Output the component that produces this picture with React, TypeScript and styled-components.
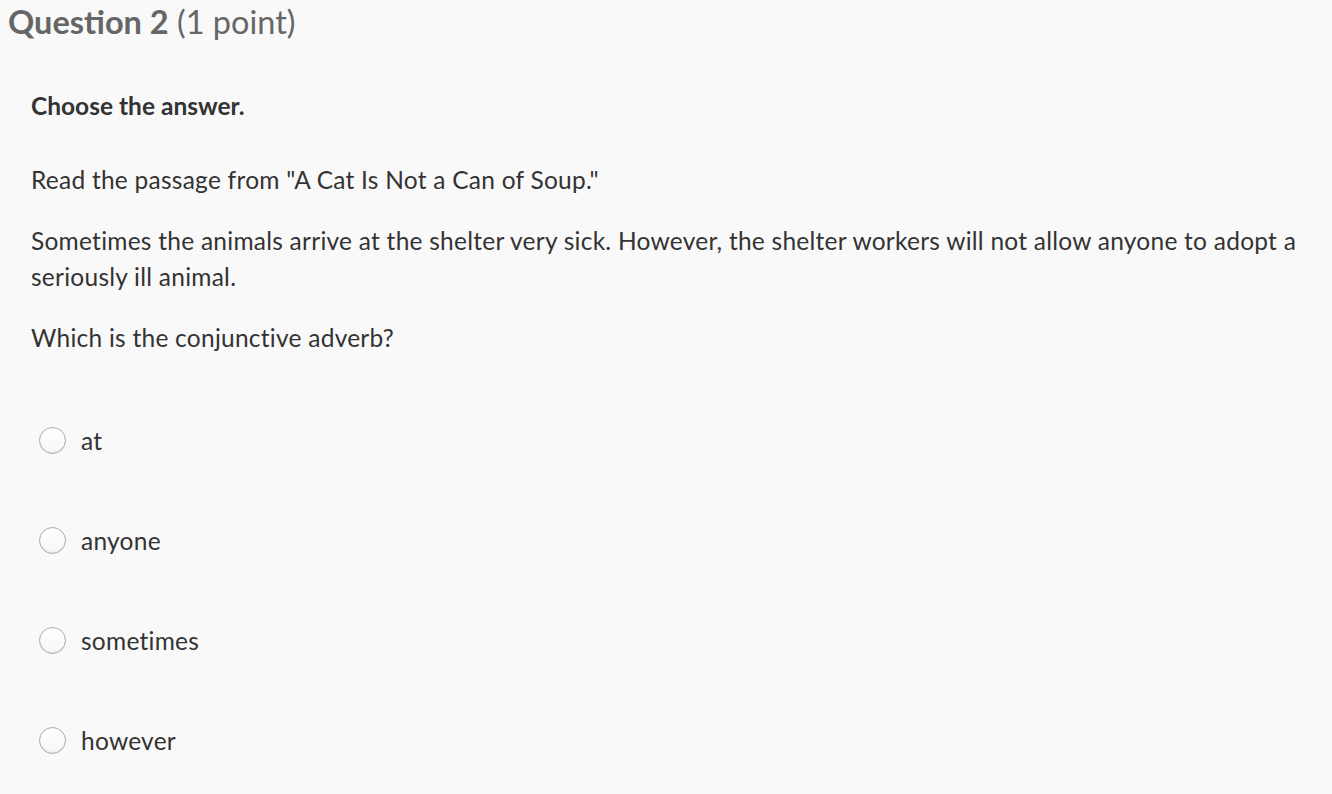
import styled, { createGlobalStyle } from "styled-components";

const GlobalStyle = createGlobalStyle`
    html, body {
        margin: 0;
        padding: 0;
        background: #f9f9f9;
    }
    body {
        font-family: Lato, "Open Sans", sans-serif;
        color: #333;
    }
`;

const options = ["at", "anyone", "sometimes", "however"];

function App() {
    return (
        <Page>
            <GlobalStyle />
            <Title>
                <strong>Question 2</strong> (1 point)
            </Title>
            <Body>
                <Prompt>Choose the answer.</Prompt>
                <Paragraph $gap={44}>Read the passage from "A Cat Is Not a Can of Soup."</Paragraph>
                <Passage>
                    Sometimes the animals arrive at the shelter very sick. However, the shelter workers will not allow anyone to adopt a seriously ill animal.
                </Passage>
                <Paragraph>Which is the conjunctive adverb?</Paragraph>
                <OptionList>
                    {options.map((opt) => (
                        <Option key={opt}>
                            <Radio type="radio" name="q2" />
                            <span>{opt}</span>
                        </Option>
                    ))}
                </OptionList>
            </Body>
        </Page>
    );
}

const Page = styled.div`
    width: 1332px;
    height: 794px;
    overflow: hidden;
`;

const Title = styled.h1`
    margin: 0;
    padding: 3px 0 0 8px;
    font-size: 32.5px;
    font-weight: 400;
    line-height: 38px;
    color: #666;

    strong {
        font-weight: 700;
    }
`;

const Body = styled.div`
    padding: 50px 0 0 31px;
    width: 1290px;
    letter-spacing: 0.25px;
`;

const Prompt = styled.p`
    margin: 0;
    font-size: 24.5px;
    font-weight: 700;
    line-height: 30px;
    color: #333;
    letter-spacing: 0;
`;

const Paragraph = styled.p<{ $gap?: number }>`
    margin: ${(p) => p.$gap ?? 28}px 0 0;
    font-size: 24.5px;
    line-height: 30px;
    color: #333;
`;

const Passage = styled(Paragraph)`
    line-height: 36px;
`;

const OptionList = styled.div`
    display: flex;
    flex-direction: column;
    gap: 70px;
    margin-top: 72px;
`;

const Option = styled.label`
    display: flex;
    align-items: center;
    gap: 15px;
    height: 30px;
    margin-left: 8px;
    font-size: 24.5px;
    color: #333;
`;

const Radio = styled.input`
    appearance: none;
    margin: 0;
    width: 27px;
    height: 27px;
    border-radius: 50%;
    border: 1px solid #aaa;
    background: linear-gradient(#fff, #f7f7f7);
    box-shadow: inset 0 -1px 1px rgba(0, 0, 0, 0.08);
`;

export default App;
